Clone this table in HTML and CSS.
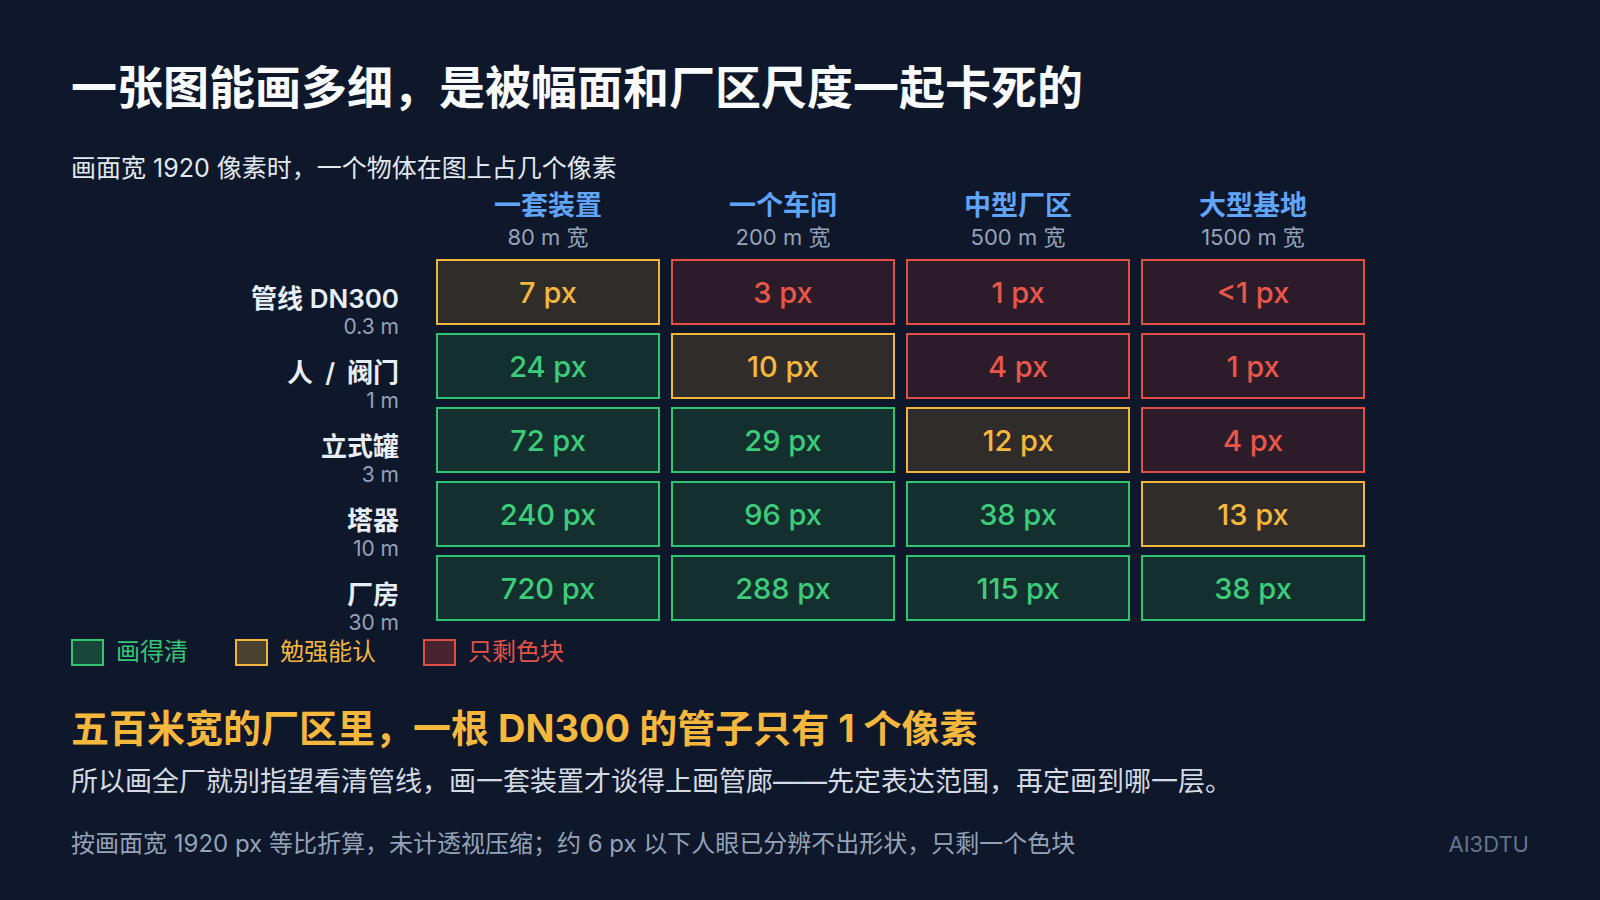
FILE: index.html
```html
<!DOCTYPE html>
<html lang="zh-CN">
<head>
<meta charset="utf-8">
<title>一张图能画多细</title>
<link rel="stylesheet" href="styles.css">
</head>
<body>
<div class="slide">
  <h1 class="title">一张图能画多细，是被幅面和厂区尺度一起卡死的</h1>
  <p class="subtitle">画面宽 1920 像素时，一个物体在图上占几个像素</p>

  <div class="matrix">
    <div class="corner"></div>
    <div class="colhead"><div class="colname">一套装置</div><div class="colsub">80 m 宽</div></div>
    <div class="colhead"><div class="colname">一个车间</div><div class="colsub">200 m 宽</div></div>
    <div class="colhead"><div class="colname">中型厂区</div><div class="colsub">500 m 宽</div></div>
    <div class="colhead"><div class="colname">大型基地</div><div class="colsub">1500 m 宽</div></div>

    <div class="rowhead"><div class="rowname">管线 DN300</div><div class="rowsub">0.3 m</div></div>
    <div class="cell warn">7 px</div>
    <div class="cell bad">3 px</div>
    <div class="cell bad">1 px</div>
    <div class="cell bad">&lt;1 px</div>

    <div class="rowhead"><div class="rowname">人<span class="sep">/</span>阀门</div><div class="rowsub">1 m</div></div>
    <div class="cell good">24 px</div>
    <div class="cell warn">10 px</div>
    <div class="cell bad">4 px</div>
    <div class="cell bad">1 px</div>

    <div class="rowhead"><div class="rowname">立式罐</div><div class="rowsub">3 m</div></div>
    <div class="cell good">72 px</div>
    <div class="cell good">29 px</div>
    <div class="cell warn">12 px</div>
    <div class="cell bad">4 px</div>

    <div class="rowhead"><div class="rowname">塔器</div><div class="rowsub">10 m</div></div>
    <div class="cell good">240 px</div>
    <div class="cell good">96 px</div>
    <div class="cell good">38 px</div>
    <div class="cell warn">13 px</div>

    <div class="rowhead"><div class="rowname">厂房</div><div class="rowsub">30 m</div></div>
    <div class="cell good">720 px</div>
    <div class="cell good">288 px</div>
    <div class="cell good">115 px</div>
    <div class="cell good">38 px</div>
  </div>

  <div class="legend">
    <div class="legend-item good"><span class="swatch"></span>画得清</div>
    <div class="legend-item warn"><span class="swatch"></span>勉强能认</div>
    <div class="legend-item bad"><span class="swatch"></span>只剩色块</div>
  </div>

  <h2 class="headline">五百米宽的厂区里，一根 DN300 的管子只有 1 个像素</h2>
  <p class="desc">所以画全厂就别指望看清管线，画一套装置才谈得上画管廊——先定表达范围，再定画到哪一层。</p>

  <div class="footer">
    <span class="note">按画面宽 1920 px 等比折算，未计透视压缩；约 6 px 以下人眼已分辨不出形状，只剩一个色块</span>
    <span class="brand">AI3DTU</span>
  </div>
</div>
</body>
</html>
```

FILE: styles.css
```css
* { box-sizing: border-box; }

html, body {
  margin: 0;
  padding: 0;
  background: #0f172a;
}

body {
  font-family: Inter, "Noto Sans CJK SC", "Noto Sans", sans-serif;
  color: #f1f5f9;
}

.slide {
  width: 1600px;
  height: 900px;
  padding: 55px 71px 0 71px;
  display: flex;
  flex-direction: column;
}

.title {
  margin: 0;
  font-size: 46px;
  line-height: 64px;
  font-weight: 700;
  color: #f8fafc;
}

.subtitle {
  margin: 34px 0 0 0;
  font-size: 25px;
  line-height: 30px;
  font-weight: 400;
  color: #e2e8f0;
}

.matrix {
  display: grid;
  grid-template-columns: 354px repeat(4, 224px);
  grid-template-rows: 68px repeat(5, 66px);
  column-gap: 11px;
  row-gap: 8px;
}

.colhead {
  text-align: center;
  padding-top: 7px;
}

.colname {
  font-size: 27px;
  line-height: 32px;
  font-weight: 700;
  color: #60a5fa;
}

.colsub {
  font-size: 22px;
  line-height: 30px;
  color: #94a3b8;
}

.rowhead {
  text-align: right;
  padding-right: 26px;
  padding-top: 24px;
}

.rowname {
  font-size: 26px;
  line-height: 32px;
  font-weight: 600;
  color: #e8eef6;
  white-space: nowrap;
}

.sep {
  margin: 0 12px;
}

.rowsub {
  font-size: 21px;
  line-height: 24px;
  color: #94a3b8;
}

.cell {
  display: flex;
  align-items: center;
  justify-content: center;
  border: 2px solid;
  font-size: 29px;
  font-weight: 500;
}

.cell.good { border-color: #2fc472; background: #13302f; color: #3dcc7c; }
.cell.warn { border-color: #f0b73c; background: #302c2a; color: #f5b83d; }
.cell.bad  { border-color: #df4f45; background: #2c1c29; color: #e8574a; }

.legend {
  display: flex;
  align-items: center;
  gap: 47px;
  margin-top: 16px;
  font-size: 24px;
  line-height: 30px;
}

.legend-item {
  display: flex;
  align-items: center;
  gap: 12px;
}

.swatch {
  width: 33px;
  height: 27px;
  border: 2px solid;
  display: inline-block;
}

.legend-item.good { color: #35c677; }
.legend-item.good .swatch { border-color: #2fc472; background: #18473a; }
.legend-item.warn { color: #f2b63c; }
.legend-item.warn .swatch { border-color: #f0b73c; background: #4a4231; }
.legend-item.bad { color: #e0544a; }
.legend-item.bad .swatch { border-color: #df4f45; background: #4a2330; }

.headline {
  margin: 37px 0 0 0;
  font-size: 38px;
  line-height: 48px;
  font-weight: 700;
  color: #f5b83d;
}

.desc {
  margin: 12px 0 0 0;
  font-size: 27px;
  line-height: 36px;
  font-weight: 400;
  color: #d4dbe5;
}

.footer {
  margin-top: 28px;
  display: flex;
  justify-content: space-between;
  align-items: baseline;
}

.note {
  font-size: 24px;
  line-height: 32px;
  color: #94a3b8;
}

.brand {
  font-size: 22px;
  line-height: 32px;
  color: #64748b;
}
```
